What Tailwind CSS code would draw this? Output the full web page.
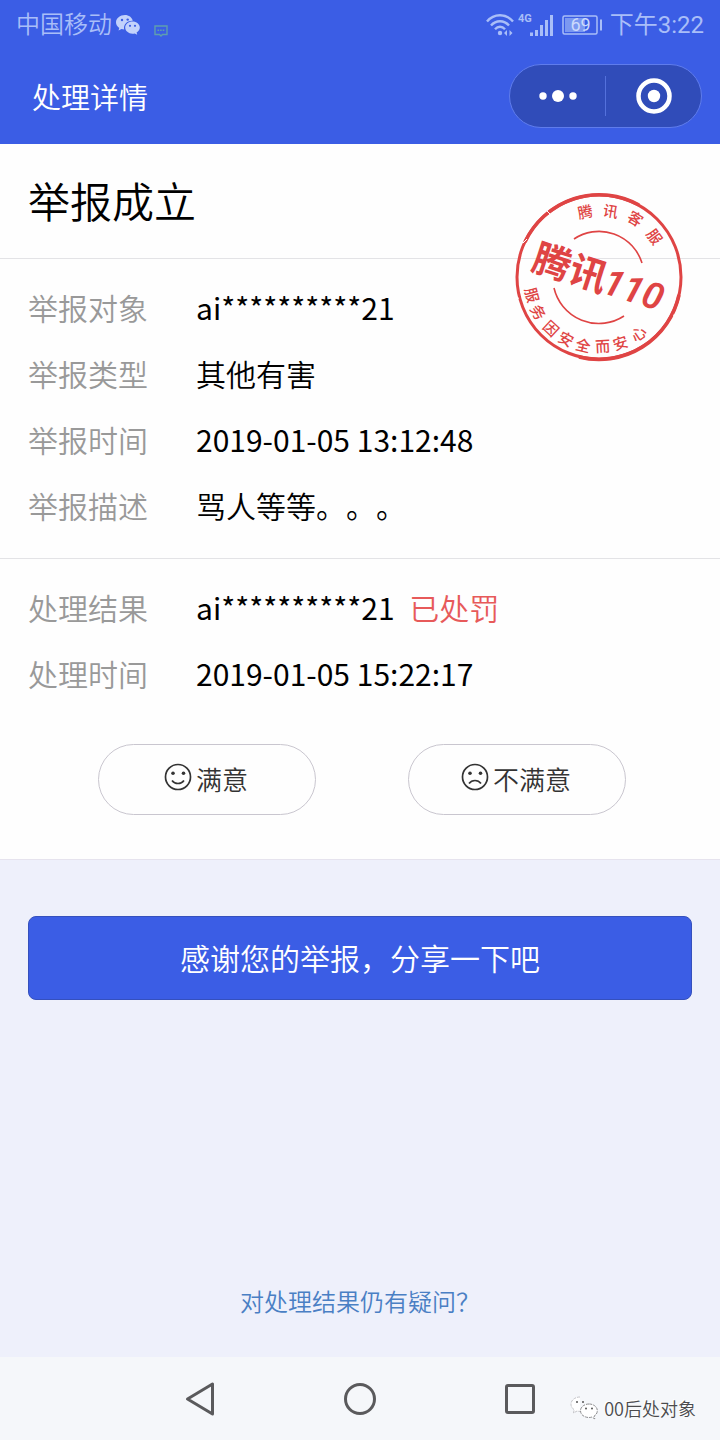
<!DOCTYPE html>
<html lang="zh-CN">
<head>
  <meta charset="UTF-8" />
  <meta name="viewport" content="width=device-width, initial-scale=1.0" />
  <title>处理详情</title>
  <!-- Tailwind CDN -->
  <script src="https://cdn.jsdelivr.net/npm/@tailwindcss/browser@4"></script>
</head>
<body class="min-h-screen flex flex-col bg-[#eef0fb] text-black font-['Noto_Sans_CJK_SC',sans-serif] font-[350]">
  <!-- ===== Header ===== -->
  <header class="bg-[#3b5de5] text-white">
    <!-- Status bar -->
    <div class="h-12 pt-0.5 px-4 flex items-center justify-between text-[#a9bef8] font-['Roboto','Noto_Sans_CJK_SC',sans-serif]">
      <div class="flex items-center">
        <span class="text-2xl">中国移动</span>
        <svg class="w-6 h-5 ml-1" viewBox="0 0 24 20" fill="#c3d2fb">
          <path d="M9 0C4 0 0 3.300 0 7.300c0 2.300 1.300 4.300 3.300 5.600L2.500 15.500l3-1.500c1 .3 1.800.4 2.700.4-1.200-4.700 2.800-9 8.600-8.700C16 2.400 12.800 0 9 0z" />
          <path d="M16.500 6.500c-4 0-7.300 2.700-7.300 6.100s3.300 6.100 7.300 6.100c.8 0 1.600-.1 2.300-.3l2.400 1.300-.6-2.200c1.900-1.200 3.200-2.900 3.200-4.900 0-3.400-3.300-6.100-7.300-6.100z" />
          <g fill="#3b5de5">
            <circle cx="6" cy="5" r="1.200" /><circle cx="11.700" cy="4.600" r="1.200" />
            <circle cx="14" cy="10.800" r="1.100" /><circle cx="19" cy="10.800" r="1.100" />
          </g>
        </svg>
        <svg class="w-3.5 h-3 ml-3.5 mt-3" viewBox="0 0 14 12" fill="none" stroke="#5f9fae" stroke-width="1.400">
          <path d="M1 1h12v8.500H8.500L7 11 5.500 9.500H1z" />
          <path d="M3.500 5.300h7" stroke-dasharray="1.600 1" />
        </svg>
      </div>
      <div class="flex items-center">
        <svg class="w-7 h-6" viewBox="0 0 28 24" fill="none" stroke="currentColor" stroke-width="2.400">
          <path d="M1 8.500C8 .2 20 .2 27 8.500" />
          <path d="M5 12.500c5-5.600 13-5.600 18 0" />
          <path d="M9 16.200c3-3.200 7-3.200 10 0" />
          <circle cx="14" cy="20" r="2.200" fill="currentColor" stroke="none" />
          <path d="M21 17v6l-3-3zM23.500 17v6l3-3z" fill="currentColor" stroke="none" />
        </svg>
        <svg class="w-9 h-7 ml-1" viewBox="0 0 36 28" fill="currentColor">
          <text x="0" y="11" font-size="11" font-weight="700">4G</text>
          <path d="M12 21.500h3v3.500h-3zM17 19h3v6h-3zM22 14h3v11h-3zM27 9h3v16h-3zM32 4h3v21h-3z" />
        </svg>
        <svg class="w-10 h-5 ml-2" viewBox="0 0 40 20" fill="none" stroke="currentColor" stroke-width="1.500">
          <rect x="1" y="1" width="34" height="18" rx="1.500" />
          <rect x="3" y="3" width="20" height="14" fill="#7b98f1" stroke="none" />
          <path d="M39 4.500v11" stroke-width="2" />
          <text x="18.500" y="16.300" text-anchor="middle" font-size="18" font-weight="400" fill="#cbd9fc" stroke="none">69</text>
        </svg>
        <span class="ml-2 text-2xl font-normal">下午3:22</span>
      </div>
    </div>
    <!-- Title bar -->
    <div class="h-24 pl-8 pr-[18px] flex items-center justify-between">
      <h1 class="text-[29px] leading-10">处理详情</h1>
      <div class="w-[193px] h-16 flex items-center rounded-full border border-[#5f7cec] bg-[#304cb9]">
        <button class="flex-1 flex justify-center" aria-label="更多">
          <svg class="w-10 h-4" viewBox="0 0 40 16" fill="#fff">
            <circle cx="5" cy="8" r="3.700" /><circle cx="20" cy="8" r="6" /><circle cx="35" cy="8" r="3.700" />
          </svg>
        </button>
        <span class="w-px h-10 bg-[#5471dc]"></span>
        <button class="flex-1 flex justify-center" aria-label="关闭">
          <svg class="w-9 h-9" viewBox="0 0 36 36">
            <circle cx="18" cy="18" r="15.500" fill="none" stroke="#fff" stroke-width="4.500" />
            <circle cx="18" cy="18" r="6.200" fill="#fff" />
          </svg>
        </button>
      </div>
    </div>
  </header>

  <!-- ===== Main ===== -->
  <main class="relative bg-[#fefefe] border-b border-[#e6e3ee]">
    <h2 class="h-[114px] px-7 pb-1 flex items-center text-[42px]">举报成立</h2>

    <!-- Report info -->
    <dl class="grid grid-cols-[168px_1fr] px-7 pt-[15px] pb-5 border-y border-[#e3e3e6] text-[30px] leading-[66px]">
      <dt class="text-[#999]">举报对象</dt>
      <dd class="font-normal">ai**********21</dd>
      <dt class="text-[#999]">举报类型</dt>
      <dd>其他有害</dd>
      <dt class="text-[#999]">举报时间</dt>
      <dd class="font-normal">2019-01-05 13:12:48</dd>
      <dt class="text-[#999]">举报描述</dt>
      <dd class="[text-spacing-trim:space-all]">骂人等等。。。</dd>
    </dl>

    <!-- Result -->
    <dl class="grid grid-cols-[168px_1fr] px-7 pt-[15px] text-[30px] leading-[66px]">
      <dt class="text-[#999]">处理结果</dt>
      <dd class="font-normal">ai**********21 <span class="ml-2 font-[350] text-[#e75a5a]">已处罚</span></dd>
      <dt class="text-[#999]">处理时间</dt>
      <dd class="font-normal">2019-01-05 15:22:17</dd>
    </dl>

    <!-- Feedback -->
    <div class="grid grid-cols-2 justify-items-center pl-13 pr-12 pt-[38px] pb-11 text-[26px] text-[#333]">
      <button class="w-[218px] h-[71px] pr-0.5 pb-0.5 flex items-center justify-center gap-1 rounded-full border border-[#c9c6cf]">
        <svg class="w-7 h-7 mb-1" viewBox="0 0 28 28" fill="none" stroke="#333" stroke-width="1.700">
          <circle cx="14" cy="14" r="12.500" />
          <path d="M8 17.500c3 4 9 4 12 0" />
          <g fill="#333" stroke="none"><circle cx="9" cy="10.300" r="1.800" /><circle cx="19.500" cy="10.300" r="1.800" /></g>
        </svg>
        <span>满意</span>
      </button>
      <button class="w-[218px] h-[71px] pr-0.5 pb-0.5 flex items-center justify-center gap-1 rounded-full border border-[#c9c6cf]">
        <svg class="w-7 h-7 mb-1" viewBox="0 0 28 28" fill="none" stroke="#333" stroke-width="1.700">
          <circle cx="14" cy="14" r="12.500" />
          <path d="M8 20.500c3-4 9-4 12 0" />
          <g fill="#333" stroke="none"><circle cx="9" cy="10.300" r="1.800" /><circle cx="19.500" cy="10.300" r="1.800" /></g>
        </svg>
        <span>不满意</span>
      </button>
    </div>

    <!-- Stamp -->
    <svg class="absolute top-12 right-9 w-[170px] h-[170px]" viewBox="-85 -85 170 170" fill="#df4444">
      <g fill="none" stroke="#df4444">
        <circle r="82" stroke-width="3" />
        <path d="M-74 -35A82 82 0 0 1 40 -72M80 18A82 82 0 0 1 -20 80" stroke-width="3.600" />
        <path d="M-25 -38A45 45 0 0 1 43 -14M-45 11A46 46 0 0 0 25 39" stroke-width="1.600" />
      </g>
      <g font-size="15" font-weight="500" text-anchor="middle">
        <text transform="rotate(-12)" y="-61">腾</text>
        <text transform="rotate(10)" y="-61">讯</text>
        <text transform="rotate(32)" y="-63">客</text>
        <text transform="rotate(54)" y="-63">服</text>
        <text transform="rotate(75)" y="75">服</text>
        <text transform="rotate(60)" y="76">务</text>
        <text transform="rotate(43)" y="76">因</text>
        <text transform="rotate(28)" y="76">安</text>
        <text transform="rotate(13)" y="76">全</text>
        <text transform="rotate(-3)" y="75">而</text>
        <text transform="rotate(-18)" y="75">安</text>
        <text transform="rotate(-35)" y="75">心</text>
      </g>
      <g transform="rotate(18)" font-weight="700">
        <text x="-68" y="14" font-size="38">腾讯</text>
        <text x="6" y="14" font-size="37" font-weight="600" font-style="italic" font-family="Roboto, sans-serif">110</text>
      </g>
      <!-- worn ink -->
      <path d="M-76 -34l4 -4M-52 -66l4 4M32 -82l1 3M79 40l-5 -2M-83 22l3 -1" stroke="#fefefe" stroke-width="1" />
    </svg>
  </main>

  <!-- ===== Share ===== -->
  <section class="flex-1 flex flex-col items-center justify-between px-7 pt-14 pb-10">
    <button class="w-full h-[84px] pb-0.5 rounded-lg border border-[#3550bd] bg-[#3b5de5] text-white text-[30px]">感谢您的举报，分享一下吧</button>
    <a href="#" class="text-2xl text-[#4a7fc4] [text-spacing-trim:space-all]">对处理结果仍有疑问？</a>
  </section>

  <!-- ===== System navigation ===== -->
  <nav class="relative h-[83px] flex items-center justify-center gap-32 bg-[#f5f7fa]">
    <button aria-label="返回">
      <svg class="w-8 h-9" viewBox="0 0 32 36" fill="none" stroke="#5a5a5c" stroke-width="3" stroke-linejoin="round">
        <path d="M28.500 3v30L3.500 18z" />
      </svg>
    </button>
    <button aria-label="主屏幕">
      <svg class="w-8 h-9" viewBox="0 0 32 36" fill="none" stroke="#5a5a5c" stroke-width="3">
        <circle cx="16" cy="18" r="14.500" />
      </svg>
    </button>
    <button aria-label="最近任务">
      <svg class="w-8 h-9" viewBox="0 0 32 36" fill="none" stroke="#5a5a5c" stroke-width="3">
        <rect x="2.500" y="4.500" width="27" height="27" rx="1.500" />
      </svg>
    </button>
    <div class="absolute right-6 bottom-4 flex items-center gap-1.5 text-lg leading-8 text-[#4b4b4d]">
      <svg class="w-7 h-6" viewBox="0 0 28 24" fill="#fff" stroke="#8a8a8c" stroke-width="1" stroke-dasharray="3 1">
        <path d="M10 1C5 1 1 4.200 1 8.200c0 2.300 1.200 4.200 3.200 5.500L3.500 17l3.500-2c1 .3 2 .4 3 .4" stroke="#c4c4c8" />
        <path d="M19 8c-4.700 0-8.500 3-8.500 6.800s3.800 6.700 8.500 6.700c1 0 2-.1 2.800-.4l3 1.700-.7-2.700c2-1.200 3.200-3.100 3.200-5.300C27.300 11 23.700 8 19 8z" />
        <g fill="#555" stroke="none">
          <circle cx="7" cy="6" r="1" /><circle cx="13" cy="6" r="1" />
          <circle cx="16" cy="12.500" r="1" /><circle cx="22" cy="12.500" r="1" />
        </g>
      </svg>
      <span class="[text-shadow:-1px_-1px_0_#fff]">00后处对象</span>
    </div>
  </nav>
</body>
</html>
